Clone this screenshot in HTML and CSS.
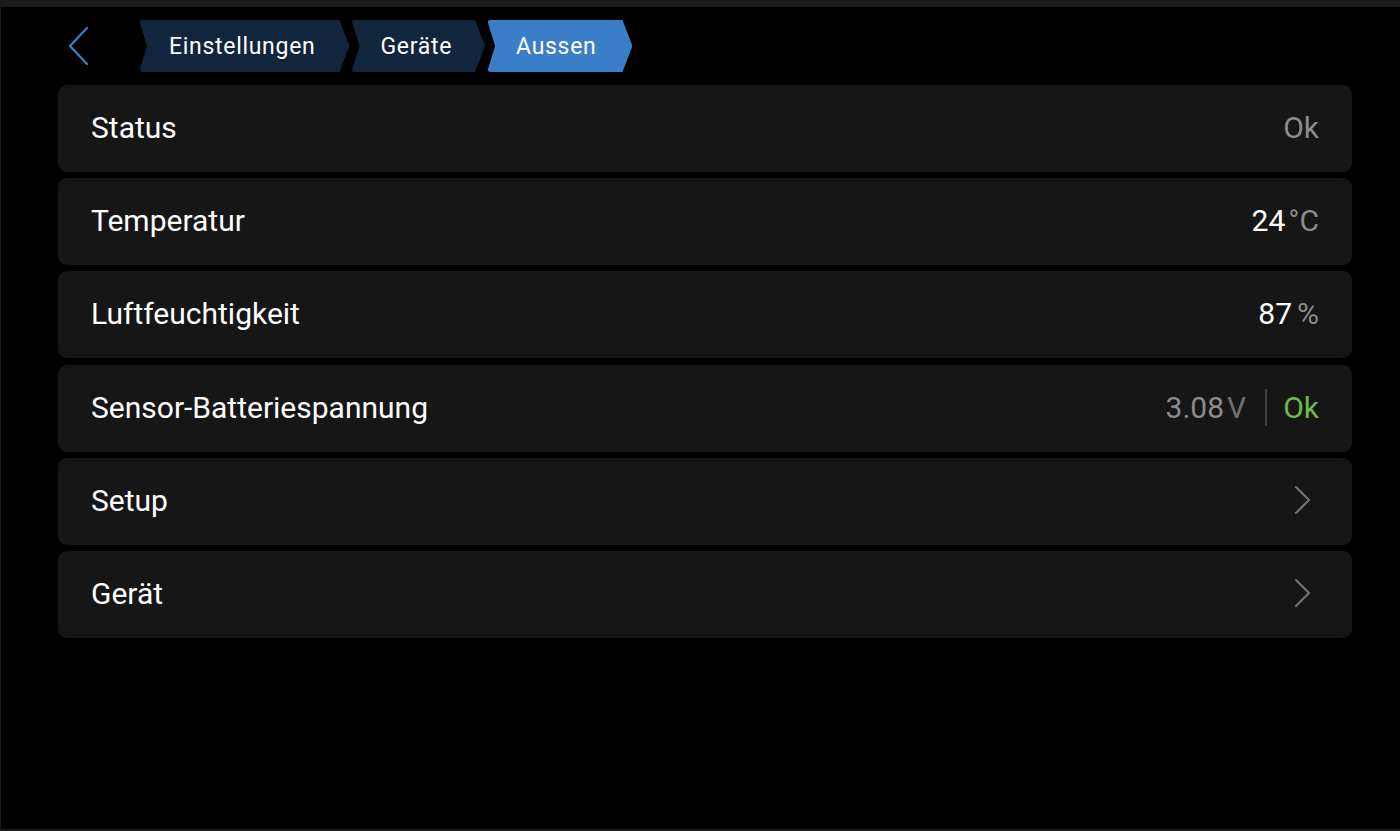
FILE: index.html
```html
<!DOCTYPE html>
<html lang="de">
<head>
<meta charset="utf-8">
<title>Aussen</title>
<link rel="stylesheet" href="styles.css">
</head>
<body>
<div class="screen">
  <header class="topbar">
    <button class="back" aria-label="Zurück">
      <svg width="22" height="40" viewBox="0 0 22 40"><polyline points="19,2 2,20 19,38" fill="none" stroke="#3a80cc" stroke-width="2.2" stroke-linecap="round" stroke-linejoin="round"/></svg>
    </button>
    <nav class="crumbs">
      <span class="crumb crumb-first">Einstellungen</span>
      <span class="crumb crumb-mid">Geräte</span>
      <span class="crumb crumb-active">Aussen</span>
    </nav>
  </header>

  <main class="list">
    <div class="row">
      <span class="label">Status</span>
      <span class="value muted">Ok</span>
    </div>
    <div class="row">
      <span class="label">Temperatur</span>
      <span class="value"><span class="num">24</span><span class="unit">°C</span></span>
    </div>
    <div class="row">
      <span class="label">Luftfeuchtigkeit</span>
      <span class="value"><span class="num">87</span><span class="unit unit-pct">%</span></span>
    </div>
    <div class="row">
      <span class="label">Sensor-Batteriespannung</span>
      <span class="value">
        <span class="num muted">3.08</span><span class="unit unit-v">V</span>
        <span class="sep"></span>
        <span class="ok">Ok</span>
      </span>
    </div>
    <div class="row">
      <span class="label">Setup</span>
      <svg class="chev" width="20" height="30" viewBox="0 0 20 30"><polyline points="3,2 16,15 3,28" fill="none" stroke="#6f6f6f" stroke-width="2.4" stroke-linecap="round" stroke-linejoin="round"/></svg>
    </div>
    <div class="row">
      <span class="label">Gerät</span>
      <svg class="chev" width="20" height="30" viewBox="0 0 20 30"><polyline points="3,2 16,15 3,28" fill="none" stroke="#6f6f6f" stroke-width="2.4" stroke-linecap="round" stroke-linejoin="round"/></svg>
    </div>
  </main>
</div>
</body>
</html>
```

FILE: styles.css
```css
html, body {
  margin: 0;
  padding: 0;
  background: #000;
}

body {
  font-family: Roboto, "Noto Sans", "Liberation Sans", sans-serif;
  color: #fff;
}

.screen {
  box-sizing: border-box;
  width: 1400px;
  height: 831px;
  border-top: 7px solid #1b1b1b;
  border-left: 1px solid #1a1a1a;
  border-bottom: 2px solid #1c1c1c;
  background: #000;
  overflow: hidden;
}

/* header: back arrow + breadcrumb trail */
.topbar {
  display: flex;
  align-items: center;
  height: 52px;
  margin-top: 13px;
}

.back {
  display: flex;
  align-items: center;
  justify-content: center;
  width: 24px;
  height: 52px;
  margin-left: 66px;
  padding: 0;
  border: 0;
  background: none;
}

.crumbs {
  display: flex;
  gap: 2px;
  margin-left: 48px;
  height: 52px;
}

.crumb {
  display: flex;
  align-items: center;
  height: 52px;
  font-size: 23px;
  letter-spacing: 0.7px;
  color: #fff;
  background: #11253d;
  clip-path: polygon(0 0, calc(100% - 10px) 0, 100% 50%, calc(100% - 10px) 100%, 0 100%, 8px 50%);
  border-radius: 4px;
}

.crumb-first {
  padding: 0 34px 0 30px;
}

.crumb-mid {
  padding: 0 33px 0 29px;
}

.crumb-active {
  padding: 0 36px 0 29px;
  background: #3a7ec7;
}

/* settings list */
.list {
  display: flex;
  flex-direction: column;
  gap: 6.2px;
  margin: 13px 48px 0 57px;
}

.row {
  display: flex;
  align-items: center;
  justify-content: space-between;
  box-sizing: border-box;
  height: 87px;
  padding: 0 33px 2px;
  background: #161616;
  border-radius: 9px;
}

.label {
  font-size: 30px;
  color: #fff;
}

.value {
  display: flex;
  align-items: center;
  font-size: 30px;
  color: #fff;
}

.muted {
  color: #8c8c8c;
}

.unit {
  color: #8c8c8c;
  margin-left: 3px;
}

.unit-pct {
  margin-left: 5px;
}

.unit-v {
  color: #6e6e6e;
  margin-left: 3px;
}

.sep {
  width: 2px;
  height: 37px;
  margin: 0 16px 0 19px;
  background: #3f3f3f;
}

.ok {
  color: #72b84d;
}

.chev {
  margin-right: 6px;
}
```
